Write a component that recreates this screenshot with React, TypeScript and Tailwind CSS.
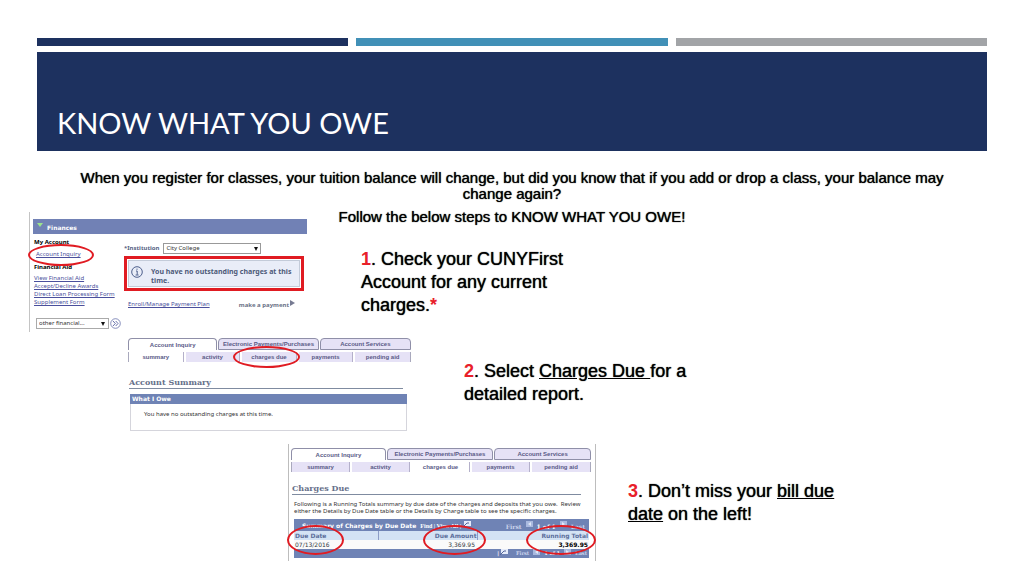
import type { ReactNode } from "react";
import clsx from "clsx";

const mainTabs = ["Account Inquiry", "Electronic Payments/Purchases", "Account Services"];
const subTabs = ["summary", "activity", "charges due", "payments", "pending aid"];
const aidLinks = [
  "View Financial Aid",
  "Accept/Decline Awards",
  "Direct Loan Processing Form",
  "Supplement Form",
];

function Circle({ className }: { className: string }) {
  return (
    <span
      className={clsx(
        "pointer-events-none absolute rounded-[50%] border-2 border-[#e01b22]",
        className
      )}
    />
  );
}

function PortalTabs({ active }: { active: string }) {
  return (
    <nav className="font-['Liberation_Sans',Arial,sans-serif] text-[6px] font-bold text-[#5a5a86]">
      <div className="grid grid-cols-[90fr_101fr_92fr] gap-px">
        {mainTabs.map((tab, i) => (
          <button
            key={tab}
            type="button"
            className={clsx(
              "h-3 rounded-t-[4px] border border-[#8f8fa8] leading-[10px] whitespace-nowrap",
              i === 0 ? "border-b-0 bg-white" : "bg-[#e6e2f6]"
            )}
          >
            {tab}
          </button>
        ))}
      </div>
      <div className="mt-[2px] grid grid-cols-5 gap-[2px] border-x border-[#a9a9bd]">
        {subTabs.map((tab) => (
          <button
            key={tab}
            type="button"
            className={clsx(
              "h-[10px] border-r border-[#b4b0ca] leading-[10px] whitespace-nowrap last:border-r-0",
              tab === active ? "bg-white" : "bg-[#e6e2f6]"
            )}
          >
            {tab}
          </button>
        ))}
      </div>
    </nav>
  );
}

function PageHeading({ children }: { children: ReactNode }) {
  return (
    <h2 className="border-b border-[#7f8ba0] font-['DejaVu_Serif',serif] text-[8px] leading-[11px] font-bold text-[#66708a]">
      {children}
    </h2>
  );
}

function FinancesPanel() {
  return (
    <div className="relative h-[120px] w-[278px] shrink-0 border-l border-[#c4c4c4] pt-[7px] pl-[3px] font-['Noto_Sans',sans-serif] text-[6px] text-[#333]">
      <div className="flex h-[15px] items-center gap-1 bg-[#7181b5] pl-1 text-white">
        <svg viewBox="0 0 6 4" className="mb-1 h-1 w-[6px]">
          <path d="M0 0h6L3 4z" fill="#9be38d" />
        </svg>
        <span className="pt-[3px] font-['DejaVu_Sans',sans-serif] leading-[8px] font-bold">Finances</span>
      </div>

      <div className="flex">
        <div className="w-[91px] shrink-0 pt-1 pl-px whitespace-nowrap">
          <h3 className="leading-[8px] font-bold text-black">My Account</h3>
          <a href="#inquiry" className="mt-1 ml-[2px] block leading-[8px] text-[#4a4f9c] underline">
            Account Inquiry
          </a>
          <h3 className="mt-[5px] leading-[8px] font-bold text-black">Financial Aid</h3>
          <ul className="mt-[3px]">
            {aidLinks.map((link) => (
              <li key={link} className="h-[8px] leading-[8px]">
                <a href="#aid" className="text-[#4a4f9c] underline">
                  {link}
                </a>
              </li>
            ))}
          </ul>
          <div className="mt-3 ml-[2px] flex items-center gap-px">
            <div className="relative">
              <select
                aria-label="Other financial"
                className="block h-[11px] w-[73px] appearance-none border border-[#aaa] bg-white pl-[2px] leading-[9px]"
              >
                <option>other financial...</option>
              </select>
              <svg viewBox="0 0 4 4" className="pointer-events-none absolute top-[4px] right-1 h-1 w-1">
                <path d="M0 0h4L2 4z" fill="#111" />
              </svg>
            </div>
            <button type="button" aria-label="Go" className="shrink-0">
              <svg viewBox="0 0 11 11" className="block size-[11px]" fill="none" stroke="#5560a0">
                <circle cx="5.5" cy="5.5" r="4.8" strokeWidth=".7" />
                <path d="M3 3l2.3 2.5L3 8M5.7 3L8 5.5 5.7 8" strokeWidth=".9" />
              </svg>
            </button>
          </div>
        </div>

        <div className="flex-1 pt-[9px] pr-[3px]">
          <div className="flex items-center gap-1">
            <label htmlFor="institution" className="font-bold text-[#566283]">
              *Institution
            </label>
            <div className="relative">
              <select
                id="institution"
                className="block h-[11px] w-[98px] appearance-none border border-[#999] bg-white pl-[2px] leading-[9px]"
              >
                <option>City College</option>
              </select>
              <svg viewBox="0 0 4 4" className="pointer-events-none absolute top-[4px] right-[3px] h-1 w-1">
                <path d="M0 0h4L2 4z" fill="#111" />
              </svg>
            </div>
          </div>
          <div className="mt-[2px] h-[35px] border-[3px] border-[#e01b22] bg-white p-px">
            <div className="flex h-full items-center gap-[8px] border border-[#c3cbd9] bg-[#e9edf8] pl-[2px]">
              <svg viewBox="0 0 12 12" className="mb-1 size-3 shrink-0" fill="none" stroke="#4d5f8c">
                <circle cx="6" cy="6" r="5.3" />
                <path d="M5 5h1.2v3.7M4.6 9h3M6 2.6v1.2" />
              </svg>
              <p className="pt-1 text-[7px] leading-[9px] font-bold text-[#4d5a78]">
                You have no outstanding charges at this time.
              </p>
            </div>
          </div>
          <div className="mt-[9px] flex justify-between pr-[9px] pl-1">
            <a href="#plan" className="leading-[8px] text-[#4a4f9c] underline">
              Enroll/Manage Payment Plan
            </a>
            <span className="flex items-center gap-px leading-[8px] font-bold text-[#6a7186]">
              make a payment
              <svg viewBox="0 0 5 6" className="mb-1 h-[6px] w-[5px]">
                <path d="M0 0l5 3-5 3z" fill="#777b92" />
              </svg>
            </span>
          </div>
        </div>
      </div>
      <Circle className="top-[32px] -left-[2px] h-[22px] w-[66px]" />
    </div>
  );
}

function SummaryPanel() {
  return (
    <div className="relative w-[283px] shrink-0 pt-px">
      <PortalTabs active="summary" />
      <div className="mt-[15px] mr-2 ml-px">
        <PageHeading>Account Summary</PageHeading>
      </div>
      <section className="mt-[5px] mr-1 ml-[2px] border border-[#d5d5dc] font-['Noto_Sans',sans-serif] text-[6px]">
        <h3 className="-mx-px -mt-px h-[10px] bg-[#6f83b5] pl-[2px] font-['DejaVu_Sans',sans-serif] leading-[10px] font-bold text-white">
          What I Owe
        </h3>
        <p className="pt-[6px] pb-[12px] pl-[13px] leading-[8px] text-[#333]">
          You have no outstanding charges at this time.
        </p>
      </section>
      <Circle className="top-[9px] left-[105px] h-[22px] w-[67px]" />
    </div>
  );
}

function GridIcon() {
  return (
    <svg viewBox="0 0 8 6" className="mb-1 h-[6px] w-2">
      <path d="M1 0h7v5H1z" fill="#e5ebfa" />
      <path d="M0 6l4-4M4 2h2" stroke="#53659a" fill="none" />
    </svg>
  );
}

function PagerButton({ label, arrow }: { label: string; arrow: string }) {
  return (
    <button type="button" aria-label={label} className="mb-1">
      <svg viewBox="0 0 7 6" className="block h-[6px] w-[7px]">
        <path d="M0 0h7v6H0z" fill="#a9b9df" />
        <path d={arrow} fill="#e0e8f7" />
      </svg>
    </button>
  );
}

function Pager() {
  return (
    <span className="flex items-center gap-1">
      <span className="text-[#ccd4ec]">First</span>
      <PagerButton label="Previous" arrow="M5 1v4L2 3z" />
      <span>1 of 1</span>
      <PagerButton label="Next" arrow="M2 1v4l3-2z" />
      <span className="text-[#ccd4ec]">Last</span>
    </span>
  );
}

function ChargesPanel() {
  return (
    <div className="relative h-[117px] w-[308px] shrink-0 border-x border-[#bdbdbd] px-[2px] pt-1">
      <div className="mr-[2px]">
        <PortalTabs active="charges due" />
      </div>
      <div className="mt-[11px] mr-[12px] ml-px">
        <PageHeading>Charges Due</PageHeading>
      </div>
      <p className="mt-[6px] ml-[3px] font-['Noto_Sans',sans-serif] text-[6px] leading-[7px] whitespace-nowrap text-[#333]">
        Following is a Running Totals summary by due date of the charges and deposits that you owe.
        &nbsp;Review
        <br />
        either the Details by Due Date table or the Details by Charge table to see the specific charges.
      </p>
      <div className="mt-1 mr-1 ml-[3px] bg-[#6f83b5] font-['DejaVu_Sans',sans-serif] text-[6px] font-bold text-white">
        <div className="flex h-[12px] items-center pr-1 pl-2 whitespace-nowrap">
          <span>Summary of Charges by Due Date</span>
          <span className="ml-1 flex items-center gap-[2px] pt-[2px] font-['Liberation_Serif',serif]">
            Find | View All | <GridIcon />
          </span>
          <span className="ml-auto pt-[2px] font-['DejaVu_Serif',serif]">
            <Pager />
          </span>
        </div>
        <table className="w-full table-fixed text-[#33383f]">
          <thead className="bg-[#d3e2f4] text-[#5c6f9c]">
            <tr className="h-[9px] leading-[8px]">
              <th className="w-[84px] border-r border-[#8c9cc6] p-0 pl-px text-left">Due Date</th>
              <th className="w-[99px] border-r border-[#8c9cc6] p-0 text-right">Due Amount</th>
              <th className="p-0 pr-px text-right">Running Total</th>
            </tr>
          </thead>
          <tbody className="bg-[#fafafa]">
            <tr className="h-[9px] leading-[8px]">
              <td className="p-0 pl-px font-normal">07/13/2016</td>
              <td className="p-0 pr-[2px] text-right font-normal">3,369.95</td>
              <td className="p-0 pr-px text-right text-black">3,369.95</td>
            </tr>
          </tbody>
        </table>
        <div className="flex h-[9px] items-center justify-end gap-2 pr-[2px] font-['DejaVu_Serif',serif] text-[5px]">
          <span className="flex items-center gap-px">
            | <GridIcon />
          </span>
          <Pager />
        </div>
      </div>
      <Circle className="top-[81px] -left-[2px] h-[30px] w-[57px]" />
      <Circle className="top-[81px] left-[134px] h-[30px] w-[63px]" />
      <Circle className="top-[81px] left-[237px] h-[30px] w-[70px]" />
    </div>
  );
}

function Step({ number, children, className }: { number: number; children: ReactNode; className: string }) {
  return (
    <p className={clsx("text-[18px] leading-[23px] [text-shadow:0_0_1px_#000]", className)}>
      <span className="font-bold text-[#e8202a] [text-shadow:none]">{number}</span>. {children}
    </p>
  );
}

export default function App() {
  return (
    <main className="min-h-screen overflow-hidden bg-white pt-[38px] font-['Liberation_Sans',Arial,sans-serif] text-black">
      <header className="mx-[37px]">
        <div className="grid h-2 grid-cols-3 gap-2">
          <span className="bg-[#1d315f]" />
          <span className="bg-[#4190b7]" />
          <span className="bg-[#a2a4a7]" />
        </div>
        <div className="mt-[6px] flex h-[99px] items-end bg-[#1d315f] px-5 pb-[11px]">
          <h1 className="font-[Lato,sans-serif] text-[29px] leading-[34px] text-white">KNOW WHAT YOU OWE</h1>
        </div>
      </header>

      <div className="mt-[19px] px-[70px] text-center text-[15px] leading-4 [text-shadow:0_0_1px_#000]">
        <p>
          When you register for classes, your tuition balance will change, but did you know that if you add or drop a
          class, your balance may change again?
        </p>
        <p className="mt-[7px]">Follow the below steps to KNOW WHAT YOU OWE!</p>
      </div>

      <section className="-mt-[13px] flex items-start pl-[29px]">
        <FinancesPanel />
        <Step number={1} className="mt-9 ml-[54px] w-[210px]">
          Check your CUNYFirst Account for any current charges.
          <span className="font-bold text-[#e8202a] [text-shadow:none]">*</span>
        </Step>
      </section>
      <section className="mt-[5px] flex items-start pl-[128px]">
        <SummaryPanel />
        <Step number={2} className="mt-[23px] ml-[53px] w-[230px]">
          Select <u>Charges Due </u>for a detailed report.
        </Step>
      </section>
      <section className="mt-[13px] flex items-start pl-[288px]">
        <ChargesPanel />
        <Step number={3} className="mt-[36px] ml-8 w-[220px]">
          Don’t miss your <u>bill due date</u> on the left!
        </Step>
      </section>
    </main>
  );
}
